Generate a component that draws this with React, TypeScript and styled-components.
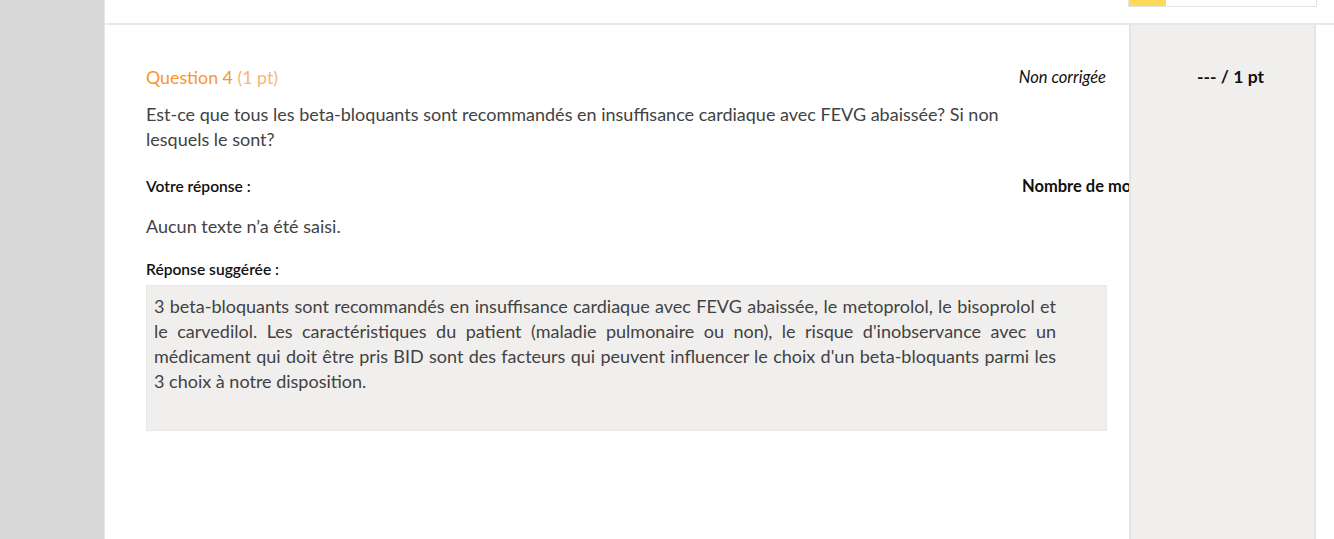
import React from 'react'
import styled, { createGlobalStyle } from 'styled-components'

const GlobalStyle = createGlobalStyle`
  html, body {
    margin: 0;
    padding: 0;
    background: #fff;
  }
  body {
    font-family: Lato, 'Open Sans', 'Liberation Sans', sans-serif;
    color: #3b3b3b;
    -webkit-font-smoothing: antialiased;
  }
`

const Page = styled.div`
  display: flex;
  height: 539px;
  overflow: hidden;
`

const Sidebar = styled.div`
  width: 104px;
  flex: none;
  background: #d8d8d8;
  border-right: 1px solid #e6e6e6;
`

const Main = styled.div`
  flex: 1;
  display: flex;
  flex-direction: column;
  background: #fff;
  min-width: 0;
`

const TopBar = styled.div`
  height: 23px;
  flex: none;
  display: flex;
  justify-content: flex-end;
  align-items: flex-start;
  padding-right: 17px;
  border-bottom: 2px solid #e8e8e8;
`

const Progress = styled.div`
  width: 187px;
  height: 6px;
  display: flex;
  border: 1px solid #e4e4e4;
  border-top: none;
  background: #fff;
`

const ProgressFill = styled.div<{ $pct: number }>`
  width: ${({ $pct }) => $pct}%;
  background: #ffd95a;
`

const Body = styled.div`
  flex: 1;
  display: flex;
`

const Content = styled.div`
  width: 961px;
  flex: none;
  margin-left: 41px;
  padding-top: 39px;
`

const Aside = styled.div`
  width: 183px;
  flex: none;
  margin-left: 22px;
  background: #f0efee;
  border-left: 2px solid #e4e4e4;
  border-right: 2px solid #e4e4e4;
  padding-top: 39px;
  text-align: center;
  position: relative;
  z-index: 1;
`

const Score = styled.div`
  font-size: 17.5px;
  line-height: 25px;
  font-weight: 700;
  color: #111;
  padding-left: 16px;
`

const HeaderRow = styled.div`
  display: flex;
  justify-content: space-between;
  align-items: center;
  height: 25px;
`

const Title = styled.div`
  font-size: 17.8px;
  color: #f7962b;
`

const Points = styled.span`
  color: #f9b676;
`

const Status = styled.div`
  font-size: 16.5px;
  font-style: italic;
  color: #111;
  padding-right: 1px;
`

const Text = styled.p<{ $mt: number }>`
  margin: ${({ $mt }) => $mt}px 0 0;
  font-size: 18px;
  line-height: 25px;
  color: #424242;
`

const Question = styled(Text)`
  max-width: 880px;
`

const LabelRow = styled.div<{ $mt: number }>`
  display: flex;
  justify-content: space-between;
  align-items: center;
  margin-top: ${({ $mt }) => $mt}px;
  height: 20px;
`

const Label = styled.div`
  font-size: 15.6px;
  font-weight: 600;
  color: #111;
`

const Count = styled.div`
  width: 107px;
  margin-right: -22px;
  font-size: 16.5px;
  font-weight: 700;
  color: #111;
  white-space: nowrap;
  overflow: hidden;
`

const Suggested = styled.div`
  margin-top: 6px;
  background: #f0efee;
  border: 1px solid #e8e8e8;
  padding: 8px 7px 36px;
`

const SuggestedText = styled.p`
  margin: 0;
  width: 902px;
  font-size: 18px;
  line-height: 25px;
  text-align: justify;
  color: #424242;
`

export default function App() {
  return (
    <>
      <GlobalStyle />
      <Page>
        <Sidebar />
        <Main>
          <TopBar>
            <Progress>
              <ProgressFill $pct={20} />
            </Progress>
          </TopBar>
          <Body>
            <Content>
              <HeaderRow>
                <Title>
                  Question 4 <Points>(1 pt)</Points>
                </Title>
                <Status>Non corrigée</Status>
              </HeaderRow>
              <Question $mt={13}>
                Est-ce que tous les beta-bloquants sont recommandés en insuffisance cardiaque avec FEVG abaissée? Si non
                lesquels le sont?
              </Question>
              <LabelRow $mt={24}>
                <Label>Votre réponse :</Label>
                <Count>Nombre de mots : 0</Count>
              </LabelRow>
              <Text $mt={18}>Aucun texte n’a été saisi.</Text>
              <LabelRow $mt={20}>
                <Label>Réponse suggérée :</Label>
              </LabelRow>
              <Suggested>
                <SuggestedText>
                  3 beta-bloquants sont recommandés en insuffisance cardiaque avec FEVG abaissée, le metoprolol, le
                  bisoprolol et le carvedilol. Les caractéristiques du patient (maladie pulmonaire ou non), le risque
                  d'inobservance avec un médicament qui doit être pris BID sont des facteurs qui peuvent influencer le
                  choix d'un beta-bloquants parmi les 3 choix à notre disposition.
                </SuggestedText>
              </Suggested>
            </Content>
            <Aside>
              <Score>--- / 1 pt</Score>
            </Aside>
          </Body>
        </Main>
      </Page>
    </>
  )
}
